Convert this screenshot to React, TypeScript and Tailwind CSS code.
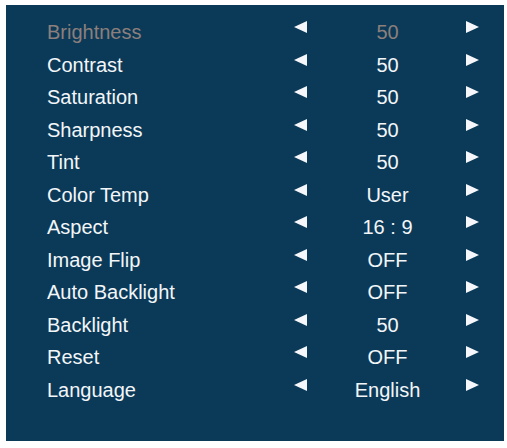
const rows = [
  { label: 'Brightness', value: '50', active: true },
  { label: 'Contrast', value: '50' },
  { label: 'Saturation', value: '50' },
  { label: 'Sharpness', value: '50' },
  { label: 'Tint', value: '50' },
  { label: 'Color Temp', value: 'User' },
  { label: 'Aspect', value: '16 : 9' },
  { label: 'Image Flip', value: 'OFF' },
  { label: 'Auto Backlight', value: 'OFF' },
  { label: 'Backlight', value: '50' },
  { label: 'Reset', value: 'OFF' },
  { label: 'Language', value: 'English' },
];

const Arrow = ({ dir }: { dir: 'left' | 'right' }) => (
  <svg width="13" height="12" viewBox="0 0 13 12" className="self-start mt-[5px]">
    <path d={dir === 'left' ? 'M0 6 L13 0 L13 12 Z' : 'M13 6 L0 0 L0 12 Z'} fill="#f5f7fa" />
  </svg>
);

export default function App() {
  return (
    <div className="w-[507px] h-[448px] bg-white pt-[5px] pl-[6px] font-['Liberation_Sans',Arial,sans-serif]">
      <div className="w-[498px] h-[436px] bg-[#0b3a58] pt-[11px] pl-[41px]">
        {rows.map((r) => (
          <div
            key={r.label}
            className={`grid grid-cols-[247px_13px_159px_13px] h-[32.5px] leading-[32.5px] text-[20px] ${
              r.active ? 'text-[#8c7f7c]' : 'text-[#f3f6f9]'
            }`}
          >
            <span>{r.label}</span>
            <Arrow dir="left" />
            <span className="text-center pl-[2px]">{r.value}</span>
            <Arrow dir="right" />
          </div>
        ))}
      </div>
    </div>
  );
}
